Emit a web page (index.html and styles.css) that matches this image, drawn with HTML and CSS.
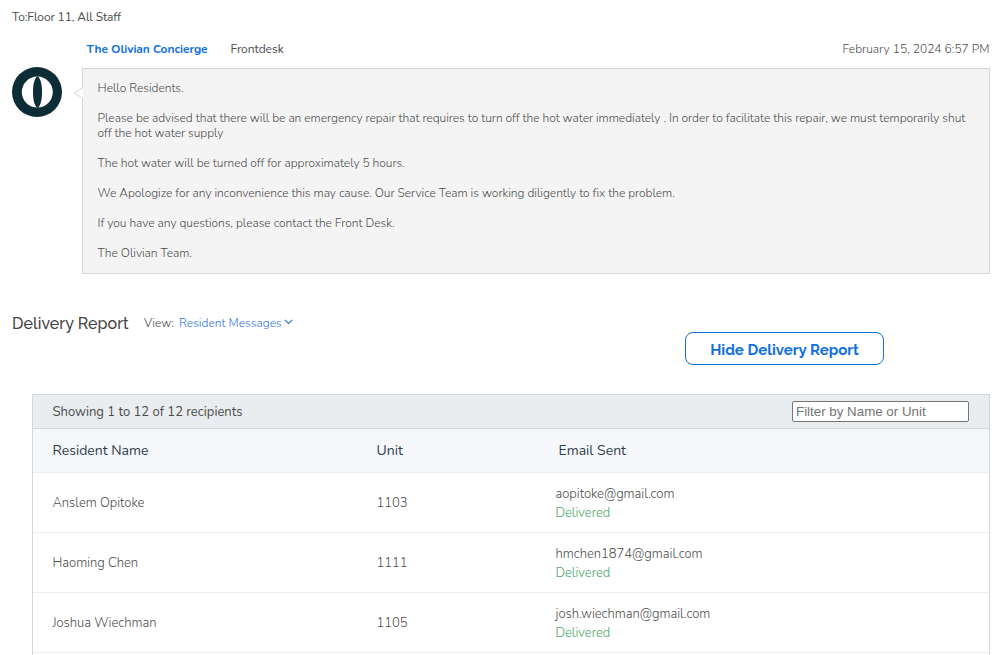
FILE: index.html
```html
<!DOCTYPE html>
<html lang="en">
<head>
<meta charset="utf-8">
<title>Delivery Report</title>
<link rel="stylesheet" href="styles.css">
</head>
<body>
<main class="page">
  <p class="to">To:Floor 11, All Staff</p>
  <header class="meta">
    <a class="sender">The Olivian Concierge</a>
    <span class="role">Frontdesk</span>
    <time class="date">February 15, 2024 6:57 PM</time>
  </header>
  <section class="message">
    <svg class="avatar" width="50" height="50" viewBox="0 0 50 50">
      <circle cx="25" cy="25" r="25" fill="#0c2d35"/>
      <circle cx="25.3" cy="25.1" r="15.5" fill="#fff"/>
      <path d="M25.500 9.200C28.900 11.500 30 18 30 25s-1.100 13.700-4.500 16.200C22.100 38.700 21 32 21 25s1.100-13.500 4.500-15.800z" fill="#0c2d35"/>
    </svg>
    <div class="bubble">
      <svg class="pointer" width="10" height="12" viewBox="0 0 10 12">
        <path d="M10 1L1 6l9 5z" fill="#fff"/>
        <path d="M9.500 1L1 6l8.500 5" fill="none" stroke="#d3d6de"/>
      </svg>
      <p>Hello Residents.</p>
      <p>Please be advised that there will be an emergency repair that requires to turn off the hot water immediately . In order to facilitate this repair, we must temporarily shut off the hot water supply</p>
      <p>The hot water will be turned off for approximately 5 hours.</p>
      <p>We Apologize for any inconvenience this may cause. Our Service Team is working diligently to fix the problem.</p>
      <p>If you have any questions, please contact the Front Desk.</p>
      <p>The Olivian Team.</p>
    </div>
  </section>
  <section class="report-head">
    <h2>Delivery Report</h2>
    <span class="view">View:</span>
    <a class="view-link">Resident Messages
      <svg width="9" height="6" viewBox="0 0 9 6"><path d="M.8.8l3.700 3.700L8.200.8" fill="none" stroke="#2f73e0" stroke-width="1.200"/></svg>
    </a>
    <button class="toggle">Hide Delivery Report</button>
  </section>
  <section class="report">
    <div class="toolbar">
      <span>Showing 1 to 12 of 12 recipients</span>
      <input class="filter" type="text" placeholder="Filter by Name or Unit">
    </div>
    <div class="row head"><span>Resident Name</span><span>Unit</span><span class="email-head">Email Sent</span></div>
    <div class="row"><span>Anslem Opitoke</span><span>1103</span><div class="email">aopitoke@gmail.com<div class="ok">Delivered</div></div></div>
    <div class="row"><span>Haoming Chen</span><span>1111</span><div class="email">hmchen1874@gmail.com<div class="ok">Delivered</div></div></div>
    <div class="row"><span>Joshua Wiechman</span><span>1105</span><div class="email">josh.wiechman@gmail.com<div class="ok">Delivered</div></div></div>
    <div class="row"></div>
  </section>
</main>
</body>
</html>
```
FILE: styles.css
```css
* { box-sizing: border-box; }
body { margin: 0; background: #fff; color: #4c4c4c; font: 300 12px/16px Nunito, "Open Sans", sans-serif; }
p, h2 { margin: 0; }
.page { height: 655px; overflow: hidden; padding: 9px 9px 0 12px; }
.to { font-weight: 400; letter-spacing: -.13px; }
.meta { display: flex; margin-top: 16px; padding-left: 74.500px; }
.sender { color: #1070dc; font-weight: 700; width: 144px; letter-spacing: -.08px; }
.role { font-weight: 400; letter-spacing: -.03px; }
.date { margin-left: auto; padding-right: .5px; }
.message { display: flex; align-items: flex-start; margin-top: 11px; }
.avatar { flex: none; margin: -1px 20px 0 0; }
.bubble { position: relative; flex: 1; height: 206px; padding: 12px 18px 12px 14.600px; border: 1px solid #d3d6de; background: #f4f4f4; line-height: 15px; letter-spacing: -.034px; }
.bubble p + p { margin-top: 15px; }
.pointer { position: absolute; left: -10px; top: 18px; }
.report-head { display: flex; align-items: flex-start; height: 120px; padding-top: 41px; }
h2 { width: 132px; padding-top: 1px; font: 500 16px/16px Raleway, "Open Sans", sans-serif; letter-spacing: .06px; color: #444; white-space: nowrap; }
.view { width: 35px; }
.view-link { color: #2f73e0; white-space: nowrap; }
.view-link svg { margin-left: -.5px; vertical-align: 2px; }
.toggle { width: 199px; height: 33px; margin: 17px 106px 0 auto; padding: 2px 0 0; border: 1px solid #1070dc; border-radius: 8px; background: #fff; color: #1070dc; font: 700 15px/20px Raleway, "Open Sans", sans-serif; }
.report { margin-left: 20px; border: 1px solid #d3d6de; border-bottom: 0; font-size: 13px; }
.toolbar { display: flex; align-items: center; justify-content: space-between; height: 34px; padding: 0 20px 0 19.500px; background: #e9edf0; border-bottom: 1px solid #d3d6de; font-weight: 400; }
.filter { width: 177px; height: 21px; padding: 1px 3px; border: 1px solid #767676; border-radius: 2px; background: #fff; font: 13.333px "Liberation Sans", Arial, sans-serif; }
.filter::placeholder { color: #757575; }
.row { display: grid; grid-template-columns: 324px 179px 1fr; align-items: center; height: 60px; padding: 1px 0 0 19.500px; border-bottom: 1px solid #e9ebee; line-height: 19px; letter-spacing: -.03px; }
.head { height: 44px; padding-top: 0; background: #f5f7fb; color: #2f3e49; font-size: 14px; font-weight: 400; letter-spacing: 0; }
.email-head { padding-left: 3px; }
.email { padding-top: 1px; }
.ok { color: #4aa568; }
```
